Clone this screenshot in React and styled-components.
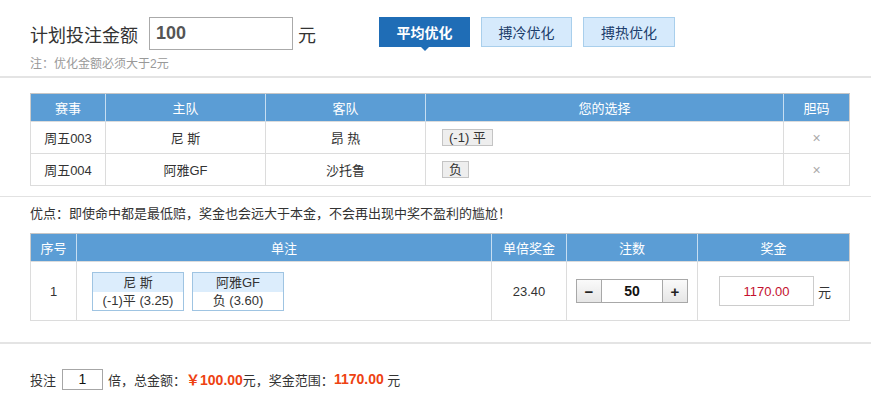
import React, { useState } from 'react'
import styled, { createGlobalStyle } from 'styled-components'

const GlobalStyle = createGlobalStyle`
    body {
        margin: 0;
        background: #fff;
        font-family: "Liberation Sans", Arial, "Noto Sans CJK SC", sans-serif;
        color: #333;
    }
    * { box-sizing: border-box; }
`;

const Page = styled.div`
    width: 871px;
`;

const TopBar = styled.div`
    display: flex;
    align-items: flex-start;
    height: 76px;
    padding: 17px 0 0 30px;
`;

const AmountBlock = styled.div`
    width: 349px;
`;

const AmountRow = styled.div`
    display: flex;
    align-items: center;
    height: 33px;
    font-size: 18px;
    color: #333;
`;

const AmountInput = styled.input`
    width: 144px;
    height: 33px;
    margin: 0 5px 0 11px;
    border: 1px solid #aaa;
    padding: 0 0 0 6px;
    font-family: "Liberation Sans", Arial, sans-serif;
    font-size: 18px;
    font-weight: bold;
    color: #555;
    :focus { outline: none; }
`;

const Hint = styled.div`
    margin-top: 4px;
    font-size: 12px;
    color: #999;
`;

const Tabs = styled.div`
    display: flex;
    gap: 11px;
`;

const Tab = styled.div`
    position: relative;
    width: ${({ wide }) => (wide ? 92 : 91)}px;
    height: 30px;
    display: flex;
    align-items: center;
    justify-content: center;
    font-size: 14px;
    cursor: pointer;
    background: ${({ active }) => (active ? '#1f6db6' : '#d6eafc')};
    border: 1px solid ${({ active }) => (active ? '#1f6db6' : '#a9cfec')};
    color: ${({ active }) => (active ? '#fff' : '#1b3d6b')};
    font-weight: ${({ active }) => (active ? 'bold' : 'normal')};
    ${({ active }) => active && `
        &::after {
            content: '';
            position: absolute;
            left: 50%;
            bottom: -5px;
            margin-left: -5px;
            border-left: 5px solid transparent;
            border-right: 5px solid transparent;
            border-top: 5px solid #1f6db6;
        }
    `}
`;

const Divider = styled.div`
    height: ${({ thick }) => (thick ? 2 : 1)}px;
    background: ${({ thick }) => (thick ? '#e4e4e4' : '#e2e2e2')};
`;

const Section = styled.div`
    padding: ${({ pad }) => pad};
`;

const Table = styled.table`
    width: 819px;
    border-collapse: collapse;
    table-layout: fixed;
    font-size: 13px;
    border: 1px solid #ccc;

    th {
        height: 28px;
        padding: 0;
        background: #5b9dd5;
        color: #fff;
        font-weight: normal;
        border-left: 1px solid #c6def2;
        border-top: 1px solid #c6c6c6;
    }
    th:first-child { border-left: none; }

    td {
        padding: 0;
        text-align: center;
        border: 1px solid #dcdcdc;
        color: #333;
    }
`;

const Row = styled.tr`
    height: ${({ h }) => h}px;
`;

const LeftCell = styled.td`
    && { text-align: left; padding-left: 16px; }
`;

const Pick = styled.span`
    display: inline-block;
    height: 17px;
    line-height: 15px;
    padding: 0 6px;
    border: 1px solid #c4c4c4;
    background: #eee;
    font-size: 13px;
    color: #333;
`;

const Close = styled.span`
    color: #aaa;
    font-size: 14px;
`;

const Advantage = styled.div`
    height: 36px;
    line-height: 34px;
    font-size: 13px;
    color: #333;
`;

const BetCell = styled.td`
    && { text-align: left; padding-left: 15px; }
`;

const BetCards = styled.div`
    display: flex;
    gap: 8px;
`;

const BetCard = styled.div`
    width: ${({ w }) => w}px;
    border: 1px solid #9fc4e2;
    font-size: 13px;
    text-align: center;
`;

const BetName = styled.div`
    height: 19px;
    line-height: 19px;
    background: #dcedfc;
    color: #333;
`;

const BetOdds = styled.div`
    height: 18px;
    line-height: 17px;
    background: #fff;
    color: #333;
`;

const Stepper = styled.div`
    display: inline-flex;
    height: 24px;
    border: 1px solid #a8a8a8;
    vertical-align: middle;
`;

const StepButton = styled.button`
    width: 24px;
    height: 22px;
    padding: 0;
    border: none;
    background: linear-gradient(#fafafa, #e6e6e6);
    font-family: "Liberation Sans", Arial, sans-serif;
    font-size: 15px;
    font-weight: bold;
    color: #222;
    cursor: pointer;
`;

const StepInput = styled.input`
    width: 62px;
    height: 22px;
    border: none;
    border-left: 1px solid #a8a8a8;
    border-right: 1px solid #a8a8a8;
    text-align: center;
    font-family: "Liberation Sans", Arial, sans-serif;
    font-size: 14px;
    font-weight: bold;
    color: #111;
    :focus { outline: none; }
`;

const PrizeWrap = styled.div`
    display: flex;
    align-items: center;
    padding-left: 21px;
    gap: 4px;
`;

const PrizeInput = styled.input`
    width: 95px;
    height: 30px;
    border: 1px solid #ccc;
    text-align: center;
    font-family: "Liberation Sans", Arial, sans-serif;
    font-size: 13px;
    color: #c4102e;
    :focus { outline: none; }
`;

const Footer = styled.div`
    display: flex;
    align-items: center;
    height: 70px;
    padding-left: 30px;
    font-size: 13px;
    color: #333;
`;

const TimesInput = styled.input`
    width: 41px;
    height: 21px;
    margin: 0 5px 0 6px;
    border: 1px solid #a6a6a6;
    text-align: center;
    font-family: "Liberation Sans", Arial, sans-serif;
    font-size: 14px;
    color: #111;
    :focus { outline: none; }
`;

const Money = styled.b`
    font-size: 14px;
    color: #ee4212;
`;

const matches = [
    { id: '周五003', home: '尼 斯', away: '昂 热', pick: '(-1) 平' },
    { id: '周五004', home: '阿雅GF', away: '沙托鲁', pick: '负' },
];

const tabs = ['平均优化', '搏冷优化', '搏热优化'];

function App() {
    const [tab, setTab] = useState(0);
    const [count, setCount] = useState(50);

    return (
        <Page>
            <GlobalStyle />
            <TopBar>
                <AmountBlock>
                    <AmountRow>
                        计划投注金额
                        <AmountInput defaultValue="100" />
                        元
                    </AmountRow>
                    <Hint>注：优化金额必须大于2元</Hint>
                </AmountBlock>
                <Tabs>
                    {tabs.map((t, i) => (
                        <Tab key={t} active={tab === i} wide={i === 2} onClick={() => setTab(i)}>{t}</Tab>
                    ))}
                </Tabs>
            </TopBar>
            <Divider thick />

            <Section pad="15px 0 10px 30px">
                <Table>
                    <colgroup>
                        <col style={{ width: 75 }} />
                        <col style={{ width: 160 }} />
                        <col style={{ width: 160 }} />
                        <col style={{ width: 358 }} />
                        <col style={{ width: 66 }} />
                    </colgroup>
                    <thead>
                        <tr>
                            <th>赛事</th>
                            <th>主队</th>
                            <th>客队</th>
                            <th>您的选择</th>
                            <th>胆码</th>
                        </tr>
                    </thead>
                    <tbody>
                        {matches.map(m => (
                            <Row h={32} key={m.id}>
                                <td>{m.id}</td>
                                <td>{m.home}</td>
                                <td>{m.away}</td>
                                <LeftCell><Pick>{m.pick}</Pick></LeftCell>
                                <td><Close>×</Close></td>
                            </Row>
                        ))}
                    </tbody>
                </Table>
            </Section>
            <Divider />

            <Section pad="0 0 21px 30px">
                <Advantage>优点：即使命中都是最低赔，奖金也会远大于本金，不会再出现中奖不盈利的尴尬！</Advantage>
                <Table>
                    <colgroup>
                        <col style={{ width: 46 }} />
                        <col style={{ width: 415 }} />
                        <col style={{ width: 75 }} />
                        <col style={{ width: 131 }} />
                        <col style={{ width: 152 }} />
                    </colgroup>
                    <thead>
                        <tr>
                            <th>序号</th>
                            <th>单注</th>
                            <th>单倍奖金</th>
                            <th>注数</th>
                            <th>奖金</th>
                        </tr>
                    </thead>
                    <tbody>
                        <Row h={59}>
                            <td>1</td>
                            <BetCell>
                                <BetCards>
                                    <BetCard w={92}>
                                        <BetName>尼 斯</BetName>
                                        <BetOdds>(-1)平 (3.25)</BetOdds>
                                    </BetCard>
                                    <BetCard w={92}>
                                        <BetName>阿雅GF</BetName>
                                        <BetOdds>负 (3.60)</BetOdds>
                                    </BetCard>
                                </BetCards>
                            </BetCell>
                            <td>23.40</td>
                            <td>
                                <Stepper>
                                    <StepButton onClick={() => setCount(c => Math.max(1, c - 1))}>−</StepButton>
                                    <StepInput value={count} onChange={e => setCount(e.target.value)} />
                                    <StepButton onClick={() => setCount(c => Number(c) + 1)}>+</StepButton>
                                </Stepper>
                            </td>
                            <td>
                                <PrizeWrap>
                                    <PrizeInput defaultValue="1170.00" />
                                    元
                                </PrizeWrap>
                            </td>
                        </Row>
                    </tbody>
                </Table>
            </Section>
            <Divider thick />

            <Footer>
                投注
                <TimesInput defaultValue="1" />
                倍，总金额：<Money>￥100.00</Money>元，奖金范围：<Money>1170.00</Money>&nbsp;元
            </Footer>
        </Page>
    )
}

export default App
